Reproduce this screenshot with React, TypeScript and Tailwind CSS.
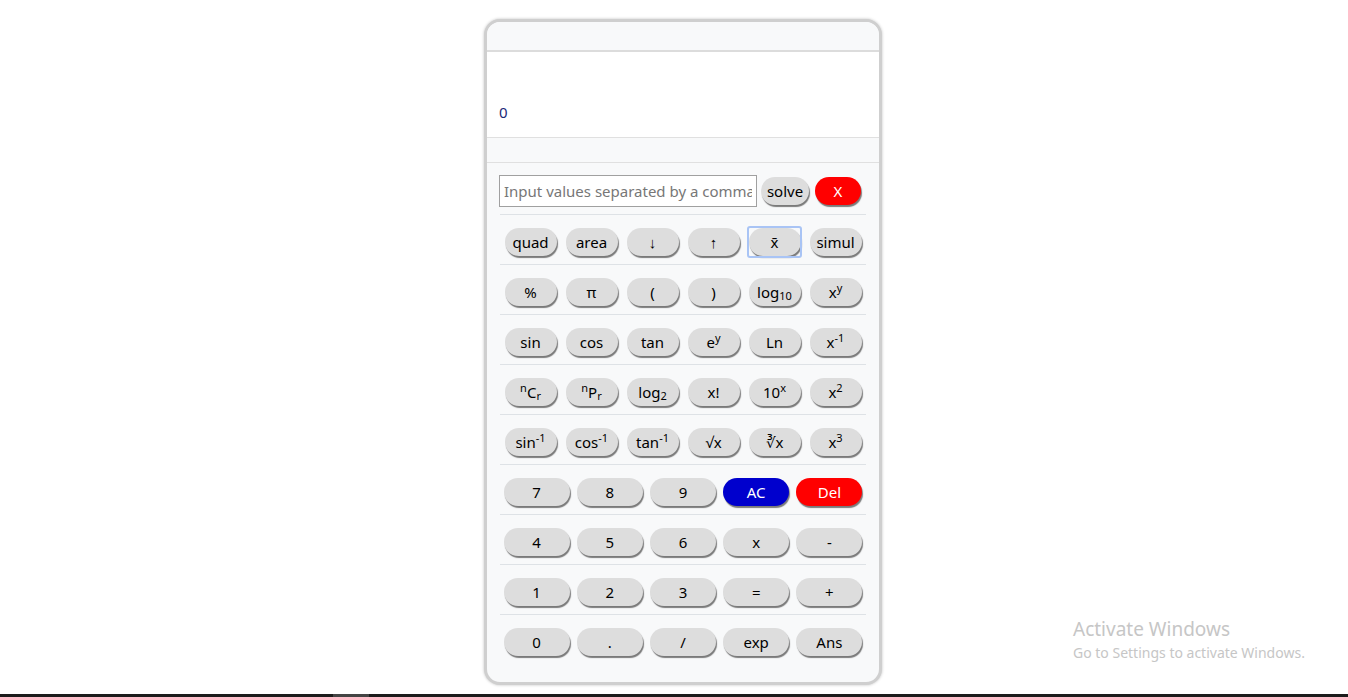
import React from 'react'

type Key = { label: React.ReactNode; tone?: 'blue' | 'red'; focused?: boolean }

const sup = (s: string) => <sup className="text-[11px]">{s}</sup>
const sub = (s: string) => <sub className="text-[11px]">{s}</sub>

const sciRows: Key[][] = [
  [{ label: 'quad' }, { label: 'area' }, { label: <span className="text-[15px]">↓</span> }, { label: <span className="text-[15px]">↑</span> }, { label: 'x̄', focused: true }, { label: 'simul' }],
  [{ label: '%' }, { label: 'π' }, { label: '(' }, { label: ')' }, { label: <>log{sub('10')}</> }, { label: <>x{sup('y')}</> }],
  [{ label: 'sin' }, { label: 'cos' }, { label: 'tan' }, { label: <>e{sup('y')}</> }, { label: 'Ln' }, { label: <>x{sup('-1')}</> }],
  [
    { label: <>{sup('n')}C{sub('r')}</> },
    { label: <>{sup('n')}P{sub('r')}</> },
    { label: <>log{sub('2')}</> },
    { label: 'x!' },
    { label: <>10{sup('x')}</> },
    { label: <>x{sup('2')}</> },
  ],
  [
    { label: <>sin{sup('-1')}</> },
    { label: <>cos{sup('-1')}</> },
    { label: <>tan{sup('-1')}</> },
    { label: '√x' },
    { label: '∛x' },
    { label: <>x{sup('3')}</> },
  ],
]

const numRows: Key[][] = [
  [{ label: '7' }, { label: '8' }, { label: '9' }, { label: 'AC', tone: 'blue' }, { label: 'Del', tone: 'red' }],
  [{ label: '4' }, { label: '5' }, { label: '6' }, { label: 'x' }, { label: '-' }],
  [{ label: '1' }, { label: '2' }, { label: '3' }, { label: '=' }, { label: '+' }],
  [{ label: '0' }, { label: '.' }, { label: '/' }, { label: 'exp' }, { label: 'Ans' }],
]

function CalcButton({ k, width }: { k: Key; width: string }) {
  const tone =
    k.tone === 'blue'
      ? 'bg-[#0000cd] text-white'
      : k.tone === 'red'
        ? 'bg-[#ff0000] text-white'
        : 'bg-[#dddddd] text-black'
  return (
    <button
      className={`relative ${width} h-[28px] rounded-full ${tone} shadow-[1px_2px_1px_#7a7a7a] leading-none flex items-center justify-center`}
    >
      {k.focused && (
        <span className="absolute -left-[2px] -right-[1px] -top-[2px] -bottom-[2px] border-2 border-[#a9c4f5] rounded-[3px]" />
      )}
      <span className="relative">{k.label}</span>
    </button>
  )
}

function KeyRow({ keys, cols }: { keys: Key[]; cols: 5 | 6 }) {
  return (
    <div className={`grid ${cols === 6 ? 'grid-cols-6' : 'grid-cols-5'} border-t border-[#dee2e6] pt-[13px] pb-[8px]`}>
      {keys.map((k, i) => (
        <div key={i} className="flex justify-center">
          <CalcButton k={k} width={cols === 6 ? 'w-[52px]' : 'w-[66px]'} />
        </div>
      ))}
    </div>
  )
}

export default function App() {
  return (
    <div className="relative h-[697px] flex flex-col bg-white overflow-hidden" style={{ fontFamily: '"Noto Sans", "Open Sans", sans-serif' }}>
      <div className="flex-1 flex justify-center pl-[18px] pt-[19px]">
        <div className="w-[398px] h-[666px] border-[3px] border-[#cfcfcf] rounded-[16px] shadow-[0_0_3px_rgba(0,0,0,0.25)] bg-[#f8f9fa] flex flex-col overflow-hidden">
          <div className="h-[30px] bg-[#f8f9fa] border-b-2 border-[#dcdcdc]" />
          <div className="h-[85px] bg-white flex items-end px-[12px] pb-[14px] text-[15px] text-[#1c2a78]">0</div>
          <div className="h-[26px] border-t border-b border-[#e0e0e0] bg-[#f8f9fa]" />
          <div className="px-[13px] pt-[12px] text-[15px]">
            <div className="flex items-center h-[32px] mb-[7px] -ml-px">
              <input
                className="w-[258px] h-[32px] border border-[#a0a0a0] bg-white px-[4px] text-[15px] placeholder:text-[#777777] outline-none"
                placeholder="Input values separated by a comma"
              />
              <div className="ml-[4px]">
                <CalcButton k={{ label: 'solve' }} width="w-[48px]" />
              </div>
              <div className="ml-[6px]">
                <CalcButton k={{ label: 'X', tone: 'red' }} width="w-[46px]" />
              </div>
            </div>
            {sciRows.map((r, i) => (
              <KeyRow key={i} keys={r} cols={6} />
            ))}
            {numRows.map((r, i) => (
              <KeyRow key={i} keys={r} cols={5} />
            ))}
          </div>
        </div>
      </div>
      <div className="h-[3px] bg-[#1c1c1c] flex">
        <div className="ml-[333px] w-[36px] bg-[#444444]" />
      </div>
      <div className="absolute left-[1073px] top-[617px] text-[#c6c6c6] pointer-events-none">
        <div className="text-[19px] leading-[24px]">Activate Windows</div>
        <div className="text-[14px] leading-[20px] mt-[2px]">Go to Settings to activate Windows.</div>
      </div>
    </div>
  )
}
